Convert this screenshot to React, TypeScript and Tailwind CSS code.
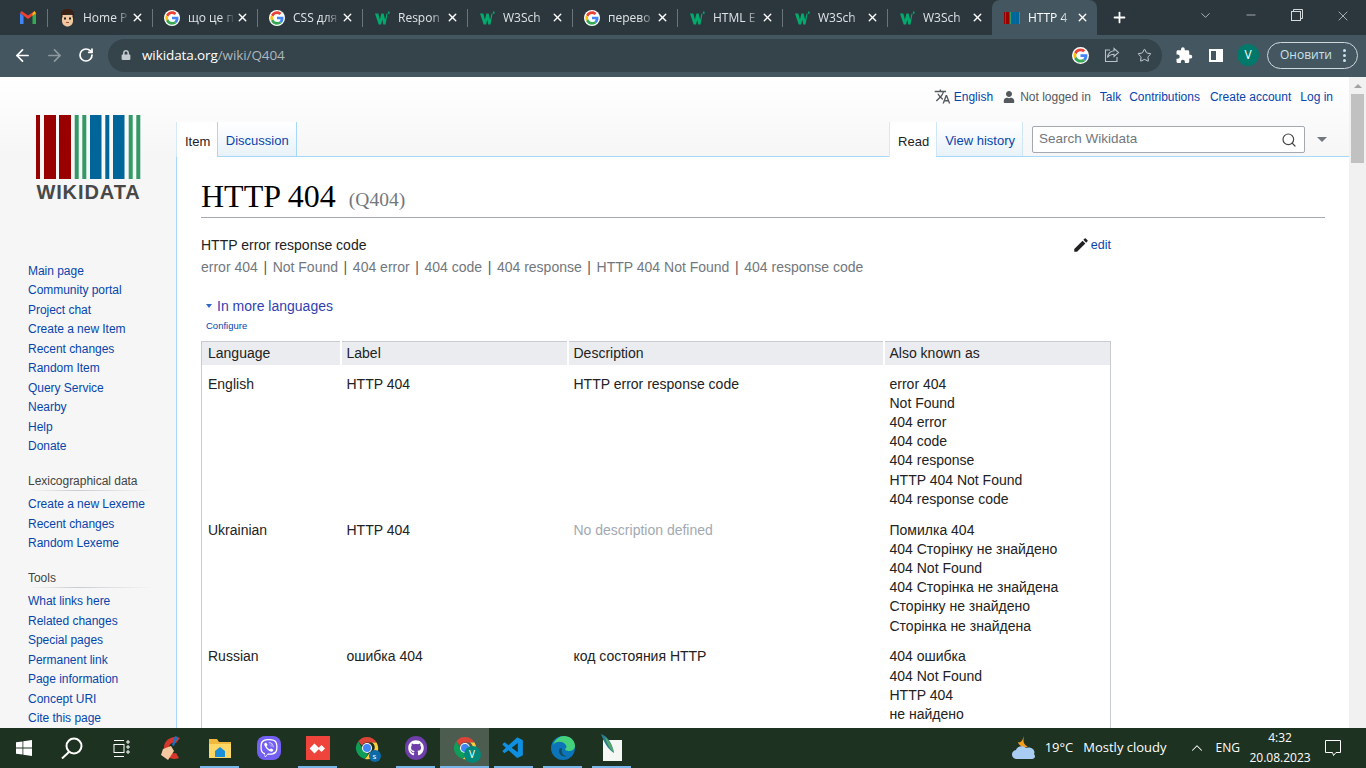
import React from "react";
import { ArrowLeft, ArrowRight, RotateCw, Star, Search, ChevronUp, ChevronDown, X, Plus, Minus } from "lucide-react";
import { FaViber, FaGithub, FaUser, FaLock } from "react-icons/fa";
import { MdExtension, MdTranslate, MdEdit } from "react-icons/md";
import { VscVscode } from "react-icons/vsc";

const GoogleG = ({ size = 16 }: { size?: number }) => (
  <svg width={size} height={size} viewBox="0 0 48 48">
    <circle cx="24" cy="24" r="24" fill="#fff" />
    <path fill="#ea4335" d="M24 12c3 0 5.600 1 7.700 3l5.700-5.700C33.900 6 29.400 4 24 4 16.200 4 9.400 8.500 6.100 15.100l6.700 5.200C14.400 15.400 18.800 12 24 12z" />
    <path fill="#4285f4" d="M43.500 24.500c0-1.400-.1-2.700-.4-4H24v7.600h11c-.5 2.500-1.900 4.700-4.100 6.100l6.400 5c3.800-3.500 6.200-8.600 6.200-14.700z" />
    <path fill="#fbbc05" d="M12.800 28.700c-.4-1.200-.7-2.500-.7-3.700s.2-2.500.7-3.700l-6.700-5.200C4.800 18.700 4 21.300 4 24s.8 5.300 2.100 7.900l6.700-3.200z" />
    <path fill="#34a853" d="M24 44c5.400 0 9.900-1.800 13.300-4.800l-6.400-5c-1.800 1.200-4.100 1.900-6.900 1.900-5.200 0-9.600-3.500-11.200-8.300l-6.700 5.100C9.400 39.500 16.200 44 24 44z" />
  </svg>
);

const GmailM = () => (
  <svg width="16" height="13" viewBox="0 0 16 13">
    <path fill="#4285f4" d="M0 2v11h3.500V5z" />
    <path fill="#34a853" d="M12.500 5v8H16V2z" />
    <path fill="#ea4335" d="M0 2l8 6 8-6-1.500-2L8 4.500 1.500 0z" />
    <path fill="#fbbc05" d="M12.500 2.500V5L16 2.500 14.500 0z" />
  </svg>
);

const W3Logo = () => (
  <svg width="15" height="14" viewBox="0 0 15 14">
    <path fill="#04aa6d" d="M0 2.500h3.300l1.600 6.200 1.500-6.200h2.200l1.500 6.200 1.500-6.200h1L10.500 13.500H8.300L7.300 8.500l-1.200 5H3.700z" />
    <path fill="#04aa6d" d="M12.800 .5h1.700v2.600h-1.100z" />
  </svg>
);

const Avatar = () => (
  <svg width="15" height="18" viewBox="0 0 15 18">
    <path fill="#f0c9a0" d="M2 6h11v6c0 3-2.500 5.500-5.500 5.500S2 15 2 12z" />
    <path fill="#3a2015" d="M1 9V4.500C1 2 4 0 7.500 0S14 2 14 4.500V9l-1.500-.5V6L10 4.500 4.500 6 2.500 6v2.500z" />
    <rect x="4" y="8.500" width="2" height="2" fill="#222" />
    <rect x="9" y="8.500" width="2" height="2" fill="#222" />
    <rect x="6" y="13" width="3" height="1" fill="#a04b3b" />
  </svg>
);

const WikidataFav = () => (
  <svg width="16" height="12" viewBox="0 0 16 12">
    <rect x="0" width="1" height="12" fill="#990000" />
    <rect x="2" width="3" height="12" fill="#990000" />
    <rect x="6" width="1" height="12" fill="#339966" />
    <rect x="8" width="3" height="12" fill="#006699" />
    <rect x="12" width="3" height="12" fill="#006699" />
    <rect x="15" width="1" height="12" fill="#339966" />
  </svg>
);

const ChromeIcon = ({ badge }: { badge: string }) => (
  <span className="relative block h-6 w-6">
    <svg width="24" height="24" viewBox="0 0 48 48">
      <path fill="#db4437" d="M24 2a22 22 0 0 1 19 11H24a11 11 0 0 0-10 6.500L6.500 10.500A22 22 0 0 1 24 2z" />
      <path fill="#0f9d58" d="M24 46A22 22 0 0 1 6.500 10.500L15 25a11 11 0 0 0 12 9.500L20 46z" />
      <path fill="#ffcd40" d="M43 13a22 22 0 0 1-23 33l9-12a11 11 0 0 0 4-21z" />
      <circle cx="24" cy="24" r="10" fill="#fff" />
      <circle cx="24" cy="24" r="8" fill="#4285f4" />
    </svg>
    <span className={badge === "V" ? "absolute -right-[4px] -bottom-[3px] flex h-[17px] w-[17px] items-center justify-center rounded-full bg-[#00897b] text-[10px] text-white" : "absolute -right-[2px] -bottom-[2px] flex h-[12px] w-[12px] items-center justify-center rounded-full bg-[#0b6aa8] text-[8px] text-white"}>
      {badge}
    </span>
  </span>
);

const tabs = [
  { title: "Home P", icon: <Avatar /> },
  { title: "що це п", icon: <GoogleG /> },
  { title: "CSS для", icon: <GoogleG /> },
  { title: "Respon", icon: <W3Logo /> },
  { title: "W3Sch", icon: <W3Logo /> },
  { title: "перево", icon: <GoogleG /> },
  { title: "HTML E", icon: <W3Logo /> },
  { title: "W3Sch", icon: <W3Logo /> },
  { title: "W3Sch", icon: <W3Logo /> },
];

const TabStrip = () => (
  <div className="flex h-[35px] shrink-0 items-stretch bg-[#2c373d] text-[12px] text-[#dfe4e7] [font-family:'Open_Sans',sans-serif]">
    <div className="flex w-[47px] items-center justify-end pr-[11px]">
      <GmailM />
    </div>
    {tabs.map((tab, i) => (
      <div key={i} className="flex w-[105px] items-center">
        <span className="h-[18px] w-px bg-[#6a757b]" />
        <span className="ml-[11px] flex w-[16px] justify-center">{tab.icon}</span>
        <span className="ml-[8px] w-[47px] overflow-hidden whitespace-nowrap [mask-image:linear-gradient(90deg,#000_70%,transparent)]">{tab.title}</span>
        <X size={13} strokeWidth={2.5} className="ml-[1px] text-white" />
      </div>
    ))}
    <div className="flex w-[105px] items-center rounded-t-lg bg-[#44565f] text-white">
      <span className="ml-[12px] flex w-[16px] justify-center"><WikidataFav /></span>
      <span className="ml-[8px] w-[47px] overflow-hidden whitespace-nowrap [mask-image:linear-gradient(90deg,#000_70%,transparent)]">HTTP 4</span>
      <X size={13} strokeWidth={2.5} className="ml-[1px]" />
    </div>
    <div className="flex items-center pl-[14px]">
      <Plus size={17} strokeWidth={2.5} className="text-white" />
    </div>
    <div className="ml-auto flex items-start pt-[8px] text-[#d5dadd]">
      <span className="flex w-[46px] justify-center"><ChevronDown size={15} strokeWidth={1.2} /></span>
      <span className="flex w-[46px] justify-center"><Minus size={14} strokeWidth={1.2} /></span>
      <span className="flex w-[46px] justify-center pt-[1px]">
        <svg width="12" height="12" viewBox="0 0 12 12" fill="none" stroke="currentColor">
          <rect x=".5" y="2.500" width="9" height="9" />
          <path d="M2.500 2.500V.5h9v9h-2" />
        </svg>
      </span>
      <span className="flex w-[46px] justify-center"><X size={16} strokeWidth={1.1} /></span>
    </div>
  </div>
);

const Toolbar = () => (
  <div className="flex h-[42px] shrink-0 items-center bg-[#44565f] pb-[2px] text-white [font-family:'Open_Sans',sans-serif]">
    <span className="flex w-[44px] justify-center"><ArrowLeft size={19} strokeWidth={2.2} /></span>
    <span className="flex w-[20px] justify-center text-[#8d999f]"><ArrowRight size={19} strokeWidth={2.2} /></span>
    <span className="flex w-[44px] justify-center"><RotateCw size={16} strokeWidth={2.6} /></span>
    <div className="flex h-[33px] w-[1054px] items-center rounded-full bg-[#35434b] pl-[13px] pr-[10px]">
      <FaLock size={10} className="text-[#c3cbcf]" />
      <span className="ml-[11px] text-[13.500px] tracking-[-0.1px]">
        wikidata.org<span className="text-[#aeb7bc]">/wiki/Q404</span>
      </span>
      <span className="ml-auto"><GoogleG size={17} /></span>
      <svg className="ml-[15px]" width="16" height="16" viewBox="0 0 16 16" fill="none" stroke="#b9c2c7" strokeWidth="1.100">
        <path d="M10 1.500l4.500 4L10 9.500V7.200c-3 0-5 1-6.500 3.300C4 7 6 4.200 10 3.800z" />
        <path d="M6 3H1.500v11.500H13V10" />
      </svg>
      <Star size={15} strokeWidth={1.6} className="ml-[17px] text-[#c9d0d4]" />
    </div>
    <span className="ml-[13px] flex w-[18px] justify-center"><MdExtension size={19} /></span>
    <span className="ml-[16px] flex h-[13px] w-[14px] justify-end border-2 border-white"><span className="w-[5px] bg-white" /></span>
    <span className="ml-[14px] flex h-[22px] w-[22px] items-center justify-center rounded-full bg-[#00796b] text-[12px]">V</span>
    <div className="ml-[8px] flex h-[27px] w-[91px] items-center rounded-full border border-[#cfd8dc] pl-[12px] text-[12px] text-[#c9e3ea]">
      Оновити
      <span className="ml-[11px] flex flex-col gap-[2px]">
        <span className="h-[3px] w-[3px] rounded-full bg-[#c9e3ea]" />
        <span className="h-[3px] w-[3px] rounded-full bg-[#c9e3ea]" />
        <span className="h-[3px] w-[3px] rounded-full bg-[#c9e3ea]" />
      </span>
    </div>
  </div>
);

const Logo = () => (
  <div className="ml-[36px] mt-[38px] w-[105px]">
    <svg width="105" height="64" viewBox="0 0 105 64" className="block">
      <rect x="0" width="4" height="64" fill="#990000" />
      <rect x="8" width="12" height="64" fill="#990000" />
      <rect x="23" width="12" height="64" fill="#990000" />
      <rect x="38.700" width="4" height="64" fill="#339966" />
      <rect x="46.300" width="4" height="64" fill="#339966" />
      <rect x="54" width="11.500" height="64" fill="#006699" />
      <rect x="69.300" width="4" height="64" fill="#006699" />
      <rect x="77" width="11.500" height="64" fill="#006699" />
      <rect x="92.700" width="4" height="64" fill="#339966" />
      <rect x="100.300" width="4" height="64" fill="#339966" />
    </svg>
    <div className="mt-[3px] whitespace-nowrap text-center text-[20px] font-bold leading-[20px] tracking-[0.9px] text-[#484848]">WIKIDATA</div>
  </div>
);

const navSections = [
  { items: ["Main page", "Community portal", "Project chat", "Create a new Item", "Recent changes", "Random Item", "Query Service", "Nearby", "Help", "Donate"] },
  { title: "Lexicographical data", items: ["Create a new Lexeme", "Recent changes", "Random Lexeme"] },
  { title: "Tools", items: ["What links here", "Related changes", "Special pages", "Permanent link", "Page information", "Concept URI", "Cite this page"] },
];

const Sidebar = () => (
  <div className="w-[176px] shrink-0">
    <Logo />
    <div className="mt-[59.500px] pl-[28px] text-[12px] leading-[19.500px] tracking-[-0.03px]">
      {navSections.map((section, i) => (
        <div key={i}>
          {section.title && (
            <div className="mt-[15px] mb-[4px] mr-[24px] bg-[linear-gradient(90deg,#f6f6f6,#c8ccd1_40%,#f6f6f6)] bg-[length:100%_1px] bg-bottom bg-no-repeat text-[#444]">
              {section.title}
            </div>
          )}
          {section.items.map((item) => (
            <div key={item} className="text-[#0645ad]">{item}</div>
          ))}
        </div>
      ))}
    </div>
  </div>
);

const PersonalBar = () => (
  <div className="flex h-[45px] shrink-0 items-end justify-end pb-[17px] pr-[16px] text-[12px] leading-[16px] text-[#0645ad]">
    <MdTranslate size={17} className="mr-[3px] text-[#54595d]" />
    <span>English</span>
    <FaUser size={12} className="ml-[10px] mb-[2px] text-[#54595d]" />
    <span className="ml-[5px] text-[#54595d]">Not logged in</span>
    <span className="ml-[9px]">Talk</span>
    <span className="ml-[8px]">Contributions</span>
    <span className="ml-[10px]">Create account</span>
    <span className="ml-[9px]">Log in</span>
  </div>
);

const TabBar = () => (
  <div className="flex h-[35px] shrink-0 items-stretch text-[13px]">
    <div className="flex items-center border-l border-[#d4e9f9] bg-white pl-[8px] pr-[7px] pt-[4px] text-[#222]">Item</div>
    <div className="flex items-center border-x border-b border-[#a7d7f9] border-t-0 bg-[linear-gradient(#fff,#e8f2f8)] px-[7.500px] pt-[4px] text-[#0645ad]">Discussion</div>
    <div className="flex flex-1 justify-end border-b border-[#a7d7f9]">
      <div className="mb-[-1px] flex items-center border-l border-[#d4e9f9] bg-white pl-[8px] pr-[7px] pt-[4px] text-[#222]">Read</div>
      <div className="flex items-center border-x border-[#cfe6f7] bg-[linear-gradient(#fff,#e8f2f8)] pl-[8px] pr-[7px] pt-[4px] text-[#0645ad]">View history</div>
      <div className="ml-[9px] mt-[4px] flex h-[27px] w-[273px] items-center justify-between rounded-[2px] border border-[#a2a9b1] bg-white pl-[6px] pr-[7px] text-[13.500px] text-[#72777d]">
        Search Wikidata
        <Search size={16} strokeWidth={1.8} className="text-[#444]" />
      </div>
      <div className="flex w-[44px] items-center justify-center pr-[10px]">
        <span className="h-0 w-0 border-x-[5.500px] border-t-[5px] border-x-transparent border-t-[#72777d]" />
      </div>
    </div>
  </div>
);

const aliases = ["error 404", "Not Found", "404 error", "404 code", "404 response", "HTTP 404 Not Found", "404 response code"];

const rows = [
  { lang: "English", label: "HTTP 404", desc: "HTTP error response code", aka: aliases },
  { lang: "Ukrainian", label: "HTTP 404", desc: "No description defined", muted: true, aka: ["Помилка 404", "404 Сторінку не знайдено", "404 Not Found", "404 Сторінка не знайдена", "Сторінку не знайдено", "Сторінка не знайдена"] },
  { lang: "Russian", label: "ошибка 404", desc: "код состояния HTTP", aka: ["404 ошибка", "404 Not Found", "HTTP 404", "не найдено"] },
];

const LanguageTable = () => (
  <table className="mt-[8px] w-[910px] table-fixed border border-[#c8ccd1] text-[14px] leading-[19.200px] text-[#222]">
    <colgroup>
      <col className="w-[139px]" />
      <col className="w-[227px]" />
      <col className="w-[316px]" />
      <col />
    </colgroup>
    <thead>
      <tr className="h-[23px] bg-[#eaecf0] text-left">
        {["Language", "Label", "Description", "Also known as"].map((h, i) => (
          <th key={h} className={i === 0 ? "pl-[6px] pt-[1px] font-normal" : "border-l-2 border-white pl-[5px] pt-[1px] font-normal"}>{h}</th>
        ))}
      </tr>
    </thead>
    <tbody>
      {rows.map((row, i) => {
        const cell = i === 2 ? "pt-[10px] pb-[40px] pl-[6px] align-top" : "pt-[10px] pb-[1.600px] pl-[6px] align-top";
        return (
          <tr key={row.lang}>
            <td className={cell}>{row.lang}</td>
            <td className={cell}>{row.label}</td>
            <td className={row.muted ? cell + " text-[#a2a9b1]" : cell}>{row.desc}</td>
            <td className={cell}>
              {row.aka.map((a) => (
                <div key={a}>{a}</div>
              ))}
            </td>
          </tr>
        );
      })}
    </tbody>
  </table>
);

const Content = () => (
  <div className="flex-1 border-l border-[#a7d7f9] bg-white pl-[24px] pr-[24px] text-[14px] text-[#222]">
    <h1 className="flex h-[61px] items-end gap-[13px] border-b border-[#a2a9b1] pb-[1px] text-[32px] leading-[40px] text-black [font-family:'Liberation_Serif',serif]">
      HTTP 404
      <span className="text-[19.500px] leading-[32px] text-[#72777d]">(Q404)</span>
    </h1>
    <div className="mt-[17px] flex w-[910px] items-start justify-between leading-[20px]">
      <span>HTTP error response code</span>
      <span className="flex items-center text-[12.500px] text-[#0645ad]">
        <MdEdit size={18} className="mr-[1px] text-[#202122]" />
        edit
      </span>
    </div>
    <div className="mt-[2px] leading-[20px] text-[#72777d]">
      {aliases.map((a, i) => (
        <span key={a}>
          {i > 0 && <span className="mx-[5.600px] text-[#54595d]">|</span>}
          {a}
        </span>
      ))}
    </div>
    <div className="mt-[19px] flex items-center pl-[5px] text-[14px] leading-[20px] text-[#2f3fb0]">
      <span className="mr-[5px] h-0 w-0 border-x-[3.500px] border-t-[4px] border-x-transparent border-t-[#36c]" />
      In more languages
    </div>
    <div className="mt-[3px] pl-[5px] text-[9.500px] leading-[14px] text-[#0645ad]">Configure</div>
    <LanguageTable />
  </div>
);

const Scrollbar = () => (
  <div className="flex w-[17px] shrink-0 flex-col items-center bg-[#f1f1f1]">
    <div className="flex h-[17px] shrink-0 items-center justify-center">
      <span className="h-0 w-0 border-x-[4px] border-b-[4px] border-x-transparent border-b-[#a3a3a3]" />
    </div>
    <div className="h-[69px] w-[13px] shrink-0 bg-[#c1c1c1]" />
  </div>
);

const WikiPage = () => (
  <div className="flex min-h-0 flex-1 overflow-hidden bg-[#f6f6f6] bg-[linear-gradient(#fff,#f6f6f6_80px)] bg-[length:100%_80px] bg-no-repeat [font-family:'Liberation_Sans',sans-serif]">
    <Sidebar />
    <div className="flex min-w-0 flex-1 flex-col">
      <PersonalBar />
      <TabBar />
      <Content />
    </div>
    <Scrollbar />
  </div>
);

const taskIcons = [
  { key: "ccleaner", icon: (
    <svg width="24" height="28" viewBox="0 0 24 28">
      <path fill="#d6372c" d="M21 4C14 1 5 5 5 14s8 13 15 10l-3-5c-4 1-7-1-7-5s3-6 7-5z" />
      <path fill="#1f6fc4" d="M16 2l3 1-4 9-2-1z" />
      <path fill="#f2c9a0" d="M4 15l8-3 3 5-6 9-7-5z" />
    </svg>
  ) },
  { key: "explorer", line: true, icon: (
    <svg width="24" height="24" viewBox="0 0 24 24">
      <path fill="#f0b83c" d="M1 3h8l2 3h12v16H1z" />
      <path fill="#ffd766" d="M1 8h22v14H1z" />
      <path fill="#1d8fd8" d="M7 21v-6l5-4 5 4v6z" />
    </svg>
  ) },
  { key: "viber", icon: (
    <span className="flex h-[24px] w-[24px] items-center justify-center rounded-[8px] bg-[#7360f2]">
      <FaViber size={18} className="text-white" />
    </span>
  ) },
  { key: "anydesk", line: true, icon: (
    <span className="flex h-[24px] w-[24px] items-center justify-center gap-px bg-[#ef443b]">
      <span className="h-[7px] w-[7px] rotate-45 bg-white" />
      <span className="h-[5px] w-[5px] rotate-45 bg-white" />
    </span>
  ) },
  { key: "chrome-s", icon: <ChromeIcon badge="s" /> },
  { key: "github", line: true, icon: (
    <span className="flex h-[24px] w-[22px] items-center justify-center rounded-full bg-[#6e3fa8]">
      <FaGithub size={16} className="text-white" />
    </span>
  ) },
  { key: "chrome-v", active: true, line: true, icon: <ChromeIcon badge="V" /> },
  { key: "vscode", line: true, icon: <VscVscode size={25} className="text-[#0f8fe0]" /> },
  { key: "edge", line: true, icon: (
    <svg width="24" height="24" viewBox="0 0 24 24">
      <circle cx="12" cy="12" r="12" fill="#0c74b8" />
      <path fill="#43d17c" d="M2 9C4 3 9 0 13 0c6 0 11 4 11 10 0 3-3 5-6 5-2 0-4-1-4-2 2-1 2-3 0-5C11 5 5 5 2 9z" />
      <path fill="#1d3220" d="M11 12c-3 0-4 3-2 6 1 2 4 3 7 2-4 0-6-3-5-8z" opacity="0.6" />
    </svg>
  ) },
  { key: "notepad", line: true, icon: (
    <svg width="24" height="28" viewBox="0 0 24 28">
      <path fill="#f5f7f5" d="M3 6h19v21H3z" />
      <path fill="#2a7d8c" d="M1 0c6 2 11 8 13 19-5-3-9-8-13-19z" />
      <path fill="#55a868" d="M5 3c4 3 7 8 9 16-4-4-7-9-9-16z" />
    </svg>
  ) },
];

const Taskbar = () => (
  <div className="flex h-10 shrink-0 items-stretch bg-[#1d3220] text-white [font-family:'Open_Sans',sans-serif]">
    <div className="flex w-[48px] items-center justify-center">
      <svg width="16" height="16" viewBox="0 0 16 16" fill="#fff">
        <path d="M0 2.300l6.500-.9v6.200H0zM7.300 1.300L16 0v7.600H7.300zM0 8.400h6.500v6.200L0 13.700zM7.300 8.400H16V16l-8.700-1.200z" />
      </svg>
    </div>
    <div className="flex w-[48px] items-center justify-center">
      <svg width="22" height="22" viewBox="0 0 22 22" fill="none" stroke="#fff" strokeWidth="2">
        <circle cx="13" cy="9" r="7.500" />
        <path d="M8 15l-7 6.500" />
      </svg>
    </div>
    <div className="flex w-[50px] items-center justify-center">
      <svg width="17" height="17" viewBox="0 0 17 17" fill="none" stroke="#fff">
        <path d="M1 .5h10M1 16.500h10" />
        <rect x="1" y="4.500" width="10" height="8" />
        <path d="M14 1h2v2h-2zM14 6h2v2h-2zM14 11h2v2h-2z" />
      </svg>
    </div>
    {taskIcons.map((t) => (
      <div key={t.key} className={t.active ? "relative flex w-[49px] items-center justify-center bg-[#4c5c4f]" : "relative flex w-[49px] items-center justify-center"}>
        {t.icon}
        {t.line && <span className={t.active ? "absolute inset-x-0 bottom-0 h-[2px] bg-[#78b6ea]" : "absolute inset-x-[5px] bottom-0 h-[2px] bg-[#78b6ea]"} />}
      </div>
    ))}
    <div className="ml-auto flex items-center text-[13px]">
      <svg width="26" height="26" viewBox="0 0 26 26">
        <path fill="#f29d1c" d="M12 1c-1 5-1 8 4 11-5 1-9-1-10-5 2 1 4 0 6-6z" />
        <path fill="#a9cdf2" d="M5 24a4.500 4.500 0 0 1-1-9c1-4 7-5 10-2 5-2 10 2 8 6 2 2 1 5-2 5z" />
      </svg>
      <span className="ml-[7px]">19°C</span>
      <span className="ml-[10px]">Mostly cloudy</span>
      <ChevronUp size={18} strokeWidth={1.4} className="ml-[21px]" />
      <span className="ml-[10px] text-[12px]">ENG</span>
      <div className="ml-[12px] flex w-[56px] flex-col items-center text-[12px] leading-[20px]">
        <span>4:32</span>
        <span>20.08.2023</span>
      </div>
      <span className="ml-[17px] mr-[25px]">
        <svg width="16" height="16" viewBox="0 0 16 16" fill="none" stroke="#fff">
          <path d="M.5 .5h15v12H11l-2.500 3-1-3H.5z" />
        </svg>
      </span>
    </div>
  </div>
);

const App: React.FC = () => {
  return (
    <div className="flex h-[768px] w-[1366px] flex-col overflow-hidden">
      <TabStrip />
      <Toolbar />
      <WikiPage />
      <Taskbar />
    </div>
  );
};

export default App;
